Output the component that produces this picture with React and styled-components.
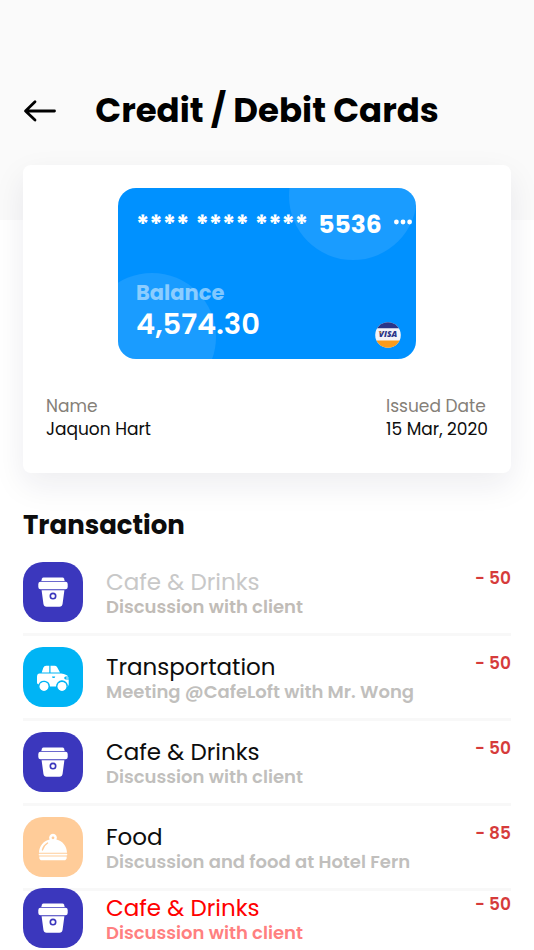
import React from "react";
import styled, { createGlobalStyle } from "styled-components";

const GlobalStyle = createGlobalStyle`
  * {
    box-sizing: border-box;
  }
  body {
    margin: 0;
    background: #fff;
    font-family: "Poppins", Inter, sans-serif;
    color: #0d0d0d;
  }
  h1, h2, h3, p, ul, dl, dd {
    margin: 0;
    padding: 0;
  }
`;

const Page = styled.div`
  min-height: 100vh;
  padding: 85px 23px 0;
  background: linear-gradient(#fafafa 220px, #fff 220px);
`;

const Header = styled.header`
  display: grid;
  grid-template-columns: 34px 1fr 34px;
  align-items: center;
`;

const BackButton = styled.button`
  display: flex;
  padding: 0;
  border: 0;
  background: none;
  color: #000;
  cursor: pointer;
`;

const Title = styled.h1`
  font-size: 34px;
  line-height: 50px;
  font-weight: 700;
  text-align: center;
  white-space: nowrap;
  color: #000;
`;

const Panel = styled.section`
  margin-top: 30px;
  padding: 23px 23px 32px;
  border-radius: 8px;
  background: #fff;
  box-shadow: 0 12px 32px rgba(20, 20, 60, 0.08);
`;

const Card = styled.div`
  position: relative;
  display: flex;
  flex-direction: column;
  justify-content: space-between;
  width: 298px;
  height: 171px;
  margin: 0 auto;
  padding: 20px 15px 11px 18px;
  border-radius: 18px;
  overflow: hidden;
  background: #0091ff;
  color: #fff;
`;

const Bubble = styled.span`
  position: absolute;
  left: ${(props) => props.$left}px;
  top: ${(props) => props.$top}px;
  width: 128px;
  height: 128px;
  border-radius: 50%;
  background: rgba(255, 255, 255, 0.1);
`;

const CardRow = styled.div`
  position: relative;
  display: flex;
  justify-content: space-between;
  align-items: ${(props) => props.$align};
`;

const CardNumber = styled.p`
  display: flex;
  gap: 6px;
  font-size: 25px;
  line-height: 34px;
  font-weight: 700;
`;

const LastDigits = styled.span`
  margin-left: 4px;
`;

const MoreButton = styled.button`
  display: flex;
  margin: 11px -11px 0 0;
  padding: 0;
  border: 0;
  background: none;
  color: #fff;
  cursor: pointer;
`;

const BalanceInfo = styled.div`
  padding-bottom: 6px;
`;

const BalanceLabel = styled.p`
  font-size: 21px;
  line-height: 26px;
  font-weight: 700;
  color: rgba(255, 255, 255, 0.5);
`;

const Balance = styled.p`
  font-size: 29px;
  line-height: 36px;
  font-weight: 600;
`;

const Details = styled.dl`
  display: flex;
  justify-content: space-between;
  margin-top: 36px;
  font-size: 17px;
  line-height: 23px;
`;

const DetailLabel = styled.dt`
  color: #858078;
`;

const SectionTitle = styled.h2`
  margin-top: 34px;
  font-size: 26px;
  line-height: 36px;
  font-weight: 700;
`;

const List = styled.ul`
  margin-top: 8px;
  list-style: none;
`;

const Item = styled.li`
  display: flex;
  gap: 23px;
  padding: 11px 0;
  border-bottom: 3px solid #f8f8f8;

  &:last-child {
    margin-top: -3px;
    padding: 0;
    border: 0;
  }
`;

const IconBox = styled.div`
  flex: none;
  width: 60px;
  height: 60px;
  border-radius: 20px;
  overflow: hidden;
  background: ${(props) => props.$color};
`;

const ItemText = styled.div`
  flex: 1;
  min-width: 0;
  padding-top: 5px;
`;

const ItemTitle = styled.h3`
  font-size: 23px;
  line-height: 30px;
  font-weight: 400;
  color: ${(props) => props.$color};
`;

const ItemNote = styled.p`
  font-size: 18px;
  line-height: 20px;
  font-weight: 600;
  color: ${(props) => props.$color};
`;

const Amount = styled.p`
  padding-top: 4px;
  font-size: 17px;
  line-height: 24px;
  font-weight: 600;
  color: #d63b3b;
`;

const ArrowIcon = () => (
  <svg width="34" height="24" viewBox="0 0 34 24" fill="none" aria-hidden="true">
    <path
      d="M12 3.8 2.5 13l9.5 9M3 13h28.5"
      stroke="currentColor"
      strokeWidth="2.8"
      strokeLinecap="round"
      strokeLinejoin="round"
    />
  </svg>
);

const DotsIcon = () => (
  <svg width="18" height="6" viewBox="0 0 18 6" fill="currentColor" aria-hidden="true">
    <circle cx="2.4" cy="3" r="2.4" />
    <circle cx="9" cy="3" r="2.4" />
    <circle cx="15.6" cy="3" r="2.4" />
  </svg>
);

const VisaIcon = () => (
  <svg width="26" height="26" viewBox="0 0 26 26" role="img" aria-label="Visa">
    <clipPath id="visa">
      <circle cx="13" cy="13" r="12.8" />
    </clipPath>
    <g clipPath="url(#visa)">
      <path fill="#f4f4f8" d="M0 0h26v26H0z" />
      <path fill="#2a3588" d="M0 0h26v6.3H0z" />
      <path fill="#f99b1c" d="M0 18.5h26V26H0z" />
      <text
        x="13"
        y="15.4"
        textAnchor="middle"
        fontFamily="Open Sans, sans-serif"
        fontSize="8.4"
        fontWeight="800"
        fontStyle="italic"
        fill="#2a3588"
      >
        VISA
      </text>
      <path fill="#f99b1c" d="M3.2 9.4h2.5l.9 2.4z" />
    </g>
  </svg>
);

const CupIcon = () => (
  <svg width="60" height="60" viewBox="0 0 60 60" fill="#fff" aria-hidden="true">
    <path d="M18.3 18.9 19 16.6q.4-1.1 1.5-1.1h19q1.1 0 1.5 1.1l.7 2.3z" />
    <rect x="15.3" y="19.8" width="29.4" height="7.4" rx="2.3" />
    <path
      fillRule="evenodd"
      d="M18.6 28.2h22.8l-1.8 13.6q-.4 2.9-3.2 2.9H23.6q-2.8 0-3.2-2.9zM30 30.6a3.5 3.5 0 1 0 0 7 3.5 3.5 0 1 0 0-7zM30 32.2a1.9 1.9 0 1 1 0 3.8 1.9 1.9 0 1 1 0-3.8z"
    />
  </svg>
);

const CarIcon = () => (
  <svg width="60" height="60" viewBox="0 0 60 60" fill="#fff" aria-hidden="true">
    <path d="M26.3 18.7v6.8h-7.6l1.6-4.8q.7-2 2.8-2zM27.5 18.7h4.1q1.6 0 2.4 1.3l3 5.5h-9.5z" />
    <path d="M16.6 26.5h21.6q5.6.8 7 3h-2.6q-1.4.2-1.4 1.5t1.5 1.5h3v5.1q0 1.6-1.7 1.6H45a6 6 0 0 0-12 .2h-6a6 6 0 0 0-11.6-1.8Q14 37.2 14 35.5v-5.6q0-3.4 2.6-3.4z" />
    <circle cx="21" cy="39.4" r="4.5" />
    <circle cx="39" cy="39.4" r="4.5" />
    <path d="M43.2 30.4h2.4v1.1h-2.4z" />
    <path fill="#00b4f5" d="M29 29.5h3.2q0 1.6-1.6 1.6T29 29.5z" />
  </svg>
);

const ClocheIcon = () => (
  <svg width="60" height="60" viewBox="0 0 60 60" fill="#fff" aria-hidden="true">
    <path
      fillRule="evenodd"
      d="M26.6 22.6a3.9 3.9 0 1 1 6.8 0c6.3 1.4 10.3 6.7 10.6 13.1H16c.3-6.4 4.3-11.7 10.6-13.1zM30 19.4a1.4 1.4 0 1 0 0 2.8 1.4 1.4 0 1 0 0-2.8z"
    />
    <path
      d="M19.4 33q1.2-4.6 5.2-7"
      fill="none"
      stroke="#ffcc99"
      strokeWidth="1.3"
      strokeLinecap="round"
    />
    <rect x="15.7" y="36.8" width="28.6" height="1.7" rx=".8" />
    <path d="M16.3 39.6h27.4v.8q0 2.8-2.8 2.8H19.1q-2.8 0-2.8-2.8z" />
  </svg>
);

const categories = {
  cafe: { color: "#3b37bd", icon: <CupIcon /> },
  car: { color: "#00b4f5", icon: <CarIcon /> },
  food: { color: "#ffcc99", icon: <ClocheIcon /> },
};

const tones = {
  normal: { title: "#0d0d0d", note: "#c1bfbd" },
  muted: { title: "#c8c8c8", note: "#c1bcb7" },
  alert: { title: "#ff0000", note: "#ff8080" },
};

const transactions = [
  { type: "cafe", tone: "muted", title: "Cafe & Drinks", note: "Discussion with client", amount: 50 },
  { type: "car", tone: "normal", title: "Transportation", note: "Meeting @CafeLoft with Mr. Wong", amount: 50 },
  { type: "cafe", tone: "normal", title: "Cafe & Drinks", note: "Discussion with client", amount: 50 },
  { type: "food", tone: "normal", title: "Food", note: "Discussion and food at Hotel Fern", amount: 85 },
  { type: "cafe", tone: "alert", title: "Cafe & Drinks", note: "Discussion with client", amount: 50 },
];

const App = () => {
  return (
    <>
      <GlobalStyle />
      <Page>
        <Header>
          <BackButton type="button" aria-label="Back">
            <ArrowIcon />
          </BackButton>
          <Title>Credit / Debit Cards</Title>
        </Header>

        <Panel>
          <Card>
            <Bubble $left={171} $top={-56} />
            <Bubble $left={-30} $top={85} />
            <CardRow $align="flex-start">
              <CardNumber>
                <span>****</span>
                <span>****</span>
                <span>****</span>
                <LastDigits>5536</LastDigits>
              </CardNumber>
              <MoreButton type="button" aria-label="More">
                <DotsIcon />
              </MoreButton>
            </CardRow>
            <CardRow $align="flex-end">
              <BalanceInfo>
                <BalanceLabel>Balance</BalanceLabel>
                <Balance>4,574.30</Balance>
              </BalanceInfo>
              <VisaIcon />
            </CardRow>
          </Card>

          <Details>
            <div>
              <DetailLabel>Name</DetailLabel>
              <dd>Jaquon Hart</dd>
            </div>
            <div>
              <DetailLabel>Issued Date</DetailLabel>
              <dd>15 Mar, 2020</dd>
            </div>
          </Details>
        </Panel>

        <SectionTitle>Transaction</SectionTitle>
        <List>
          {transactions.map((item, index) => (
            <Item key={index}>
              <IconBox $color={categories[item.type].color}>
                {categories[item.type].icon}
              </IconBox>
              <ItemText>
                <ItemTitle $color={tones[item.tone].title}>{item.title}</ItemTitle>
                <ItemNote $color={tones[item.tone].note}>{item.note}</ItemNote>
              </ItemText>
              <Amount>- {item.amount}</Amount>
            </Item>
          ))}
        </List>
      </Page>
    </>
  );
};

export default App;
